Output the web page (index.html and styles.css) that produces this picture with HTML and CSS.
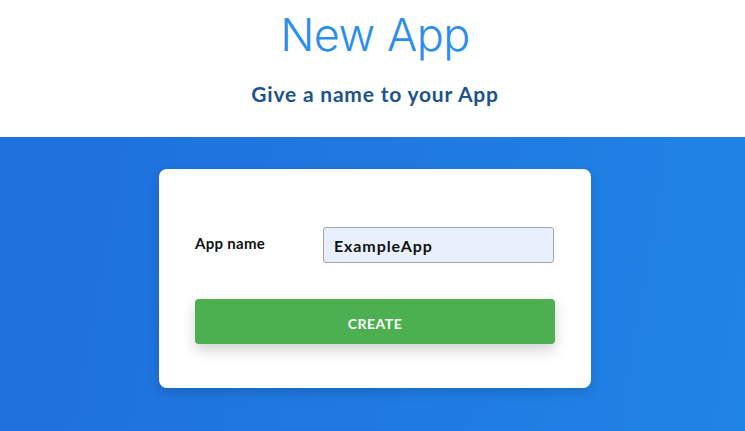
FILE: index.html
```html
<!DOCTYPE html>
<html lang="en">
<head>
<meta charset="utf-8">
<title>New App</title>
<link rel="stylesheet" href="styles.css">
</head>
<body>
<header class="hero">
  <h1 class="hero-title">New App</h1>
  <h2 class="hero-sub">Give a name to your App</h2>
</header>
<main class="stage">
  <form class="card">
    <div class="field">
      <label class="field-label" for="appname">App name</label>
      <input class="field-input" id="appname" type="text" value="ExampleApp">
    </div>
    <button class="btn" type="button">CREATE</button>
  </form>
</main>
</body>
</html>
```

FILE: styles.css
```css
* { box-sizing: border-box; }
html, body { margin: 0; padding: 0; height: 100%; }
body {
  font-family: Lato, "Open Sans", sans-serif;
  background: #fff;
  display: flex;
  flex-direction: column;
}
.hero {
  height: 137px;
  display: flex;
  flex-direction: column;
  align-items: center;
  padding-left: 5px;
}
.hero-title {
  margin: 8px 0 0;
  font-family: Inter, Lato, sans-serif;
  font-weight: 300;
  font-size: 45px;
  line-height: 54px;
  color: #2b8eec;
  letter-spacing: -0.5px;
}
.hero-sub {
  margin: 18px 0 0;
  font-size: 21px;
  font-weight: 700;
  line-height: 28px;
  letter-spacing: 0.8px;
  color: #1c538c;
}
.stage {
  flex: 1;
  background: linear-gradient(100deg, #1f6fdc 0%, #2083e6 100%);
  display: flex;
  justify-content: center;
  padding: 32px 0 0 5px;
}
.card {
  width: 432px;
  height: 219px;
  background: #fff;
  border-radius: 8px;
  padding: 58px 36px 0;
  box-shadow: 0 4px 12px rgba(0, 0, 0, 0.15);
}
.field {
  display: flex;
  align-items: center;
}
.field-label {
  width: 128px;
  font-size: 15px;
  font-weight: 700;
  letter-spacing: 0.3px;
  color: #111;
  padding-bottom: 4px;
}
.field-input {
  width: 231px;
  height: 36px;
  background: #e8f0fe;
  border: 1px solid #a4a6ad;
  border-radius: 3px;
  padding: 0 10px;
  font-family: inherit;
  font-size: 16px;
  font-weight: 700;
  letter-spacing: 0.9px;
  color: #111;
  outline: none;
}
.btn {
  margin-top: 36px;
  width: 360px;
  height: 45px;
  border: none;
  border-radius: 4px;
  background: #4caf50;
  color: #fff;
  font-family: inherit;
  font-size: 14px;
  font-weight: 700;
  letter-spacing: 0.5px;
  padding-top: 4px;
  box-shadow: 0 6px 14px rgba(0, 0, 0, 0.18);
  cursor: pointer;
}
```
